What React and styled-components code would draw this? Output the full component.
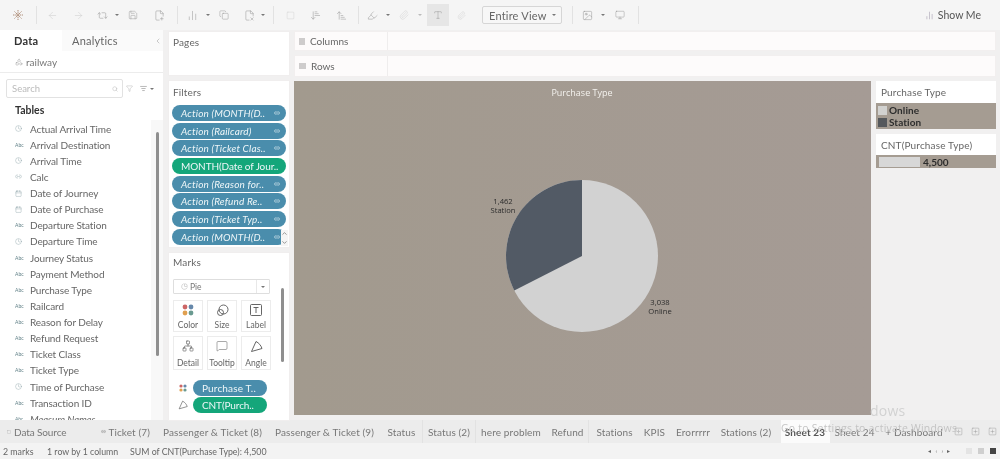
import React from "react";
import styled, { createGlobalStyle } from "styled-components";
import {
  ArrowLeft, ArrowRight, Repeat2, Save, FilePlus2, ChevronDown, ChevronLeft, Search as SearchGlyph,
  Filter, ListFilter, Network, MessageSquare, Square, Type, BarChart2, Monitor, Image, Highlighter, Paperclip,
  ArrowDownNarrowWide, ArrowUpNarrowWide, Copy, FileX2, Shapes, Clock, Calendar, PieChart, ChevronUp, Link2,
  SquarePlus,
} from "lucide-react";

const Global = createGlobalStyle`
  html, body { margin: 0; padding: 0; background: #f1f0f0; overflow: hidden; }
  * { box-sizing: border-box; }
  body { font-family: Lato, "Open Sans", "Liberation Sans", sans-serif; color: #555; }
`;

const Page = styled.div`
  position: relative; width: 1000px; height: 459px; display: flex; flex-direction: column;
  background: #f1f0f0; overflow: hidden; filter: blur(0.35px);
`;

const Toolbar = styled.header`
  height: 30px; flex: none; display: flex; align-items: center; background: #f5f5f5; color: #9a9a9a;
`;
const Slot = styled.span`
  width: ${p => p.$w}px; height: 22px; flex: none; display: flex; align-items: center; justify-content: center;
  background: ${p => (p.$active ? "#e6e6e6" : "transparent")};
  color: ${p => p.$dim ? "#c9c9c9" : "#8a8a8a"};
`;
const Divider = styled.span`
  width: 1px; height: 18px; flex: none; background: #e2e2e2; margin-left: ${p => p.$ml || 0}px;
`;
const Caret = styled.span`
  width: 4px; height: 22px; flex: none; display: flex; align-items: center; justify-content: center; margin-right: ${p => p.$mr || 0}px;
  &::before { content: ""; border-left: 2px solid transparent; border-right: 2px solid transparent; border-top: 2px solid ${p => p.$dim ? "#bbb" : "#777"}; }
`;
const ViewSelect = styled.div`
  width: 80px; height: 18px; margin: 0 10px 0 9px; flex: none; display: flex; align-items: center;
  border: 1px solid #d6d6d6; border-radius: 2px; background: #f7f7f7; font-size: 11px; color: #666; padding-left: 6px;
  letter-spacing: .2px;
  span:first-child { flex: 1; }
  span:last-child { width: 14px; display: flex; justify-content: center; }
`;
const ShowMe = styled.div`
  margin-left: auto; margin-right: 19px; display: flex; align-items: center; gap: 4px; font-size: 10.5px; color: #555;
`;

const Main = styled.div`
  flex: 1; min-height: 0; display: flex;
`;

const DataPane = styled.aside`
  width: 163px; flex: none; background: #fff; display: flex; flex-direction: column; overflow: hidden; margin-right: 5px;
`;
const TabsRow = styled.div`
  height: 21px; flex: none; display: flex; align-items: center; background: #fafafa; font-size: 11px; color: #666;
`;
const PaneTab = styled.div`
  width: ${p => p.$w}px; height: 100%; display: flex; align-items: center; padding-left: ${p => p.$pl}px;
  background: ${p => (p.$active ? "#fff" : "transparent")}; color: ${p => (p.$active ? "#333" : "#666")};
  font-weight: ${p => (p.$active ? 700 : 400)}; letter-spacing: .2px;
`;
const Source = styled.div`
  height: 22px; flex: none; display: flex; align-items: center; gap: 3px; padding: 1px 0 0 15px; font-size: 10px; color: #777;
  border-bottom: 1px solid #ececec;
`;
const SearchRow = styled.div`
  height: 25px; flex: none; display: flex; align-items: flex-end; padding-left: 6px; color: #888;
`;
const SearchBox = styled.div`
  width: 117px; height: 19px; border: 1px solid #e2e2e2; border-radius: 2px; display: flex; align-items: center;
  justify-content: space-between; padding: 0 4px 0 5px; font-size: 9.5px; color: #bbb; margin-right: 3px;
`;
const SearchTool = styled.span`
  display: flex; align-items: center; margin-left: ${p => p.$ml}px; height: 19px;
`;
const TablesHead = styled.div`
  padding: 6px 0 0 15px; height: 22px; flex: none; font-size: 10.5px; font-weight: 700; color: #333;
`;
const FieldsArea = styled.div`
  flex: 1; min-height: 0; display: flex; overflow: hidden;
`;
const FieldList = styled.ul`
  list-style: none; margin: 0; padding: .5px 0 0 15px; flex: 1; min-width: 0;
`;
const Field = styled.li`
  height: 16.14px; display: flex; align-items: center; font-size: 10px; color: #666; white-space: nowrap; letter-spacing: -.1px;
  font-style: ${p => (p.$italic ? "italic" : "normal")};
`;
const FieldMark = styled.span`
  width: 15px; flex: none; font-size: 5px; color: #5f7f86; display: flex; align-items: center; letter-spacing: 0;
`;
const ScrollTrack = styled.div`
  width: 12px; flex: none; background: #f8f8f8; margin-top: -2px; padding: 14px 0 0 5px;
`;
const ScrollThumb = styled.div`
  width: 3px; height: ${p => p.$h}px; background: #8f8f8f; border-radius: 2px;
`;

const CardsCol = styled.div`
  width: 122px; flex: none; display: flex; flex-direction: column; gap: 4px; margin: 1px 4px 0 0;
`;
const Card = styled.section`
  height: ${p => p.$h}px; flex: none; background: #fff; border: 1px solid #f0eeee; padding: ${p => p.$pt}px 0 0 4px; position: relative;
  overflow: hidden;
`;
const CardTitle = styled.div`
  font-size: 10px; color: #666; height: ${p => p.$h || 14}px; letter-spacing: .15px;
`;
const PillStack = styled.div`
  display: flex; flex-direction: column; gap: 1.7px; margin: 4px 0 0 -1px;
`;
const Pill = styled.div`
  width: ${p => p.$w || 114}px; height: 16px; flex: none; border-radius: 8px; display: flex; align-items: center;
  justify-content: space-between; padding: 0 6px 0 9px; background: ${p => (p.$green ? "#14a67a" : "#4a8dac")};
  color: #eef6f8; font-size: 10px; font-style: ${p => (p.$green || p.$plain ? "normal" : "italic")}; white-space: nowrap;
  letter-spacing: ${p => (p.$green ? "-.1px" : ".15px")};
`;
const Stepper = styled.div`
  position: absolute; left: 112px; bottom: 1px; width: 7px; height: 16px; background: #f5f5f5; display: flex; flex-direction: column;
  align-items: center; justify-content: space-between; color: #555;
`;
const MarkType = styled.div`
  width: 97px; height: 15px; border: 1px solid #dedede; border-radius: 1px; display: flex; align-items: center; font-size: 8.5px;
  color: #777; padding-left: 7px; gap: 2px; margin-top: 1px;
  b { margin-left: auto; width: 13px; height: 100%; border-left: 1px solid #e8e8e8; display: flex; align-items: center; justify-content: center; font-weight: 400; }
`;
const MarkGrid = styled.div`
  width: 97px; display: grid; grid-template-columns: repeat(3, 30px); grid-template-rows: 32px 34px; column-gap: 4px; row-gap: 4px; margin-top: 6px;
`;
const MarkBtn = styled.div`
  border: 1px solid #ececec; display: flex; flex-direction: column; align-items: center; justify-content: space-between;
  padding: 3px 0 1px; font-size: 8.5px; color: #666;
`;
const MarkThumb = styled.div`
  position: absolute; left: 112px; top: 35px; width: 3px; height: 74px; background: #8f8f8f; border-radius: 2px;
`;
const EncRow = styled.div`
  display: flex; align-items: center; height: 17.5px;
`;
const EncList = styled.div`
  margin-top: 9px;
`;
const EncIcon = styled.span`
  width: 20px; flex: none; display: flex; justify-content: center; color: #777;
`;

const Center = styled.div`
  flex: 1; min-width: 0; display: flex; flex-direction: column; padding-top: 1px;
`;
const Shelf = styled.div`
  height: ${p => p.$h}px; flex: none; margin-bottom: 4px; width: 702px; background: #fdfbfb; border: 1px solid #f2efef; display: flex; align-items: center;
`;
const ShelfLabel = styled.div`
  width: 93px; height: 100%; flex: none; border-right: 1px solid #efeded; display: flex; align-items: center; gap: 5px; padding-left: 4px;
  font-size: 10px; color: #666;
`;
const Lower = styled.div`
  flex: 1; min-height: 0; display: flex; gap: 5px;
`;
const Sheet = styled.main`
  width: 577px; height: 334px; flex: none; background: linear-gradient(90deg, #a29a8e, #a59b95);
  svg { display: block; }
`;
const RightCol = styled.div`
  width: 120px; flex: none; display: flex; flex-direction: column; gap: 5px;
`;
const LegendCard = styled.section`
  background: #fff; display: flex; flex-direction: column;
`;
const LegendHead = styled.div`
  height: ${p => p.$h}px; padding-left: 5px; display: flex; align-items: center; font-size: 10px; color: #666; letter-spacing: .15px;
`;
const LegendBody = styled.div`
  background: #a59c92; padding: ${p => p.$pad};
`;
const LegendItem = styled.div`
  display: flex; align-items: center; height: 12px; gap: 2px; font-size: 10px; font-weight: 700; color: #2d2d2d; letter-spacing: .1px;
`;
const Swatch = styled.span`
  width: 9px; height: 9px; background: ${p => p.$c};
`;
const RangeBar = styled.div`
  height: 13px; display: flex; align-items: center; gap: 3px; font-size: 10px; font-weight: 700; color: #2d2d2d;
  span:first-child { width: 41px; height: 10px; background: #d7d7d7; margin-left: 3px; }
`;

const SheetTabs = styled.nav`
  height: 23px; flex: none; display: flex; align-items: center; background: #ececec; font-size: 10px; color: #777; white-space: nowrap; letter-spacing: .12px;
`;
const SheetTab = styled.div`
  flex: none; width: ${p => p.$w}px; height: 100%; display: flex; align-items: center; justify-content: ${p => p.$left ? "flex-start" : "center"};
  padding-left: ${p => p.$pl || 0}px; gap: ${p => p.$gap || 0}px; margin-left: ${p => p.$ml || 0}px;
  letter-spacing: ${p => (p.$tight ? "-.1px" : "inherit")};
  background: ${p => (p.$active ? "#fbfbfb" : "transparent")}; font-weight: ${p => (p.$active ? 700 : 400)};
  color: ${p => (p.$active ? "#555" : "#777")}; border-right: 1px solid ${p => (p.$line ? "#e2e2e2" : "transparent")};
`;
const TabIcons = styled.div`
  display: flex; margin-left: 5px; gap: 8px; color: #888;
`;
const StatusBar = styled.footer`
  height: 16px; flex: none; display: flex; align-items: center; background: #f3f3f3; font-size: 8.8px; color: #666; padding-left: 3px; white-space: nowrap;
`;
const StatusItem = styled.span`
  width: ${p => p.$w}px; flex: none;
`;
const StatusTools = styled.div`
  margin-left: auto; display: flex; align-items: center; color: #777; padding-right: 4px;
`;
const Nav = styled.span`
  font-size: 5.5px; letter-spacing: 4.5px; margin-right: 5px; color: #666;
`;
const ViewDot = styled.span`
  width: 6px; height: 6px; margin-left: 6px; background: ${p => p.$c};
`;
const Watermark = styled.div`
  position: absolute; left: ${p => p.$l}px; top: ${p => p.$t}px; font-size: ${p => p.$s}px; color: ${p => p.$c}; white-space: nowrap; letter-spacing: .2px;
  pointer-events: none; font-family: "Open Sans", sans-serif;
`;

const I = { strokeWidth: 1 };

const Logo = () => (
  <svg width="12" height="12" viewBox="0 0 12 12" stroke="#b08f7a" strokeWidth="1" fill="none">
    <path d="M6 1v10M1 6h10M2.5 2.5l7 7M9.5 2.5l-7 7" strokeDasharray="1.5 .7" />
  </svg>
);
const Abc = () => <FieldMark>Abc</FieldMark>;
const Cal = () => <FieldMark><Calendar size={7} {...I} /></FieldMark>;
const Time = () => <FieldMark><Clock size={7} {...I} /></FieldMark>;
const Link = () => <FieldMark><Link2 size={7} {...I} /></FieldMark>;

const fields = [
  ["Actual Arrival Time", Time], ["Arrival Destination", Abc], ["Arrival Time", Time], ["Calc", Link],
  ["Date of Journey", Cal], ["Date of Purchase", Cal], ["Departure Station", Abc], ["Departure Time", Time],
  ["Journey Status", Abc], ["Payment Method", Abc], ["Purchase Type", Abc], ["Railcard", Abc],
  ["Reason for Delay", Abc], ["Refund Request", Abc], ["Ticket Class", Abc], ["Ticket Type", Abc],
  ["Time of Purchase", Time], ["Transaction ID", Abc], ["Measure Names", Abc],
];

const filters = [
  ["Action (MONTH(D..", 0], ["Action (Railcard)", 0], ["Action (Ticket Clas..", 0], ["MONTH(Date of Jour..", 1],
  ["Action (Reason for..", 0], ["Action (Refund Re..", 0], ["Action (Ticket Typ..", 0], ["Action (MONTH(D..", 0],
];

const tabs = [
  ["Passenger & Ticket (8)", 112], ["Passenger & Ticket (9)", 112], ["Status", 42, 1], ["Status (2)", 53, 1],
  ["here problem", 71], ["Refund", 42, 1], ["Stations", 52], ["KPIS", 28], ["Erorrrrr", 49], ["Stations (2)", 57],
];

const ColorDots = ({ size = 12 }) => (
  <svg width={size} height={size} viewBox="0 0 12 12">
    <circle cx="3" cy="3" r="2.4" fill="#c66" /><circle cx="9" cy="3" r="2.4" fill="#68a" />
    <circle cx="3" cy="9" r="2.4" fill="#e0a050" /><circle cx="9" cy="9" r="2.4" fill="#6a9a90" />
  </svg>
);
const SizeIcon = () => (
  <svg width="13" height="13" viewBox="0 0 13 13" fill="none" stroke="#555" strokeWidth=".9">
    <circle cx="7.5" cy="5.5" r="4.5" /><circle cx="4.5" cy="8.5" r="3" />
  </svg>
);
const AngleIcon = ({ size = 13, c = "#555" }) => (
  <svg width={size} height={size} viewBox="0 0 13 13" fill="none" stroke={c} strokeWidth=".9">
    <path d="M1.5 11.5 6 1.5c3 1.5 5 4 6 7z" />
  </svg>
);
const LabelIcon = () => (
  <svg width="12" height="12" viewBox="0 0 12 12" fill="none" stroke="#555" strokeWidth=".9">
    <rect x=".5" y=".5" width="11" height="11" rx="1" /><path d="M3.5 3.5h5M6 3.5v5.5" />
  </svg>
);
const marks = [
  ["Color", <ColorDots key="a" />], ["Size", <SizeIcon key="b" />], ["Label", <LabelIcon key="c" />],
  ["Detail", <Network key="d" size={12} strokeWidth={1.1} color="#444" />],
  ["Tooltip", <MessageSquare key="e" size={12} strokeWidth={1} color="#555" />], ["Angle", <AngleIcon key="f" />],
];

export default function App() {
  return (
    <Page>
      <Global />
      <Toolbar>
        <Slot $w={36}><Logo /></Slot>
        <Divider />
        <Slot $w={30} $dim><ArrowLeft size={11} {...I} /></Slot>
        <Slot $w={22} $dim><ArrowRight size={11} {...I} /></Slot>
        <Slot $w={26}><Repeat2 size={11} {...I} /></Slot>
        <Caret $mr={2} />
        <Slot $w={24}><Save size={10} {...I} /></Slot>
        <Slot $w={28}><FilePlus2 size={11} {...I} /></Slot>
        <Divider $ml={4} />
        <Slot $w={28}><BarChart2 size={11} {...I} /></Slot>
        <Caret />
        <Slot $w={28}><Copy size={10} {...I} /></Slot>
        <Slot $w={23}><FileX2 size={11} {...I} /></Slot>
        <Caret $mr={3} />
        <Slot $w={5} />
        <Divider />
        <Slot $w={32} $dim><Square size={9} {...I} /></Slot>
        <Slot $w={18}><ArrowDownNarrowWide size={11} {...I} /></Slot>
        <Slot $w={34}><ArrowUpNarrowWide size={11} {...I} /></Slot>
        <Divider />
        <Slot $w={27}><Highlighter size={11} {...I} /></Slot>
        <Caret />
        <Slot $w={28} $dim><Paperclip size={10} {...I} /></Slot>
        <Caret $dim />
        <Slot $w={5} />
        <Slot $w={22} $active><Type size={10} {...I} /></Slot>
        <Slot $w={24} $dim><Paperclip size={9} {...I} /></Slot>
        <ViewSelect><span>Entire View</span><span><Caret /></span></ViewSelect>
        <Divider />
        <Slot $w={28}><Image size={11} {...I} /></Slot>
        <Caret />
        <Slot $w={30}><Monitor size={10} {...I} /></Slot>
        <Divider $ml={3} />
        <ShowMe><BarChart2 size={9} color="#7a6f8a" {...I} /><span>Show Me</span></ShowMe>
      </Toolbar>

      <Main>
        <DataPane>
          <TabsRow>
            <PaneTab $w={62} $pl={14} $active>Data</PaneTab>
            <PaneTab $w={92} $pl={10}>Analytics</PaneTab>
            <ChevronLeft size={8} {...I} />
          </TabsRow>
          <Source><Shapes size={8} {...I} />railway</Source>
          <SearchRow>
            <SearchBox>Search<SearchGlyph size={6} /></SearchBox>
            <SearchTool $ml={0}><Filter size={7} {...I} /></SearchTool>
            <SearchTool $ml={7}><ListFilter size={7} /></SearchTool>
            <SearchTool $ml={3}><Caret /></SearchTool>
          </SearchRow>
          <TablesHead>Tables</TablesHead>
          <FieldsArea>
            <FieldList>
              {fields.map(([name, Icon]) => (
                <Field key={name} $italic={name === "Measure Names"}><Icon />{name}</Field>
              ))}
            </FieldList>
            <ScrollTrack><ScrollThumb $h={224} /></ScrollTrack>
          </FieldsArea>
        </DataPane>

        <CardsCol>
          <Card $h={45} $pt={4}><CardTitle>Pages</CardTitle></Card>
          <Card $h={168} $pt={5}>
            <CardTitle $h={15}>Filters</CardTitle>
            <PillStack>
              {filters.map(([t, g], i) => (
                <Pill key={i} $green={g}>{t}{!g && <Link2 size={6} />}</Pill>
              ))}
            </PillStack>
            <Stepper><ChevronUp size={7} /><ChevronDown size={7} /></Stepper>
          </Card>
          <Card $h={169} $pt={3}>
            <CardTitle $h={22}>Marks</CardTitle>
            <MarkType><PieChart size={7} {...I} />Pie<b><Caret /></b></MarkType>
            <MarkThumb />
            <MarkGrid>
              {marks.map(([l, ic]) => <MarkBtn key={l}>{ic}{l}</MarkBtn>)}
            </MarkGrid>
            <EncList>
              <EncRow><EncIcon><ColorDots size={8} /></EncIcon><Pill $w={74} $plain>Purchase T..</Pill></EncRow>
              <EncRow><EncIcon><AngleIcon size={10} c="#666" /></EncIcon><Pill $w={74} $green>CNT(Purch..</Pill></EncRow>
            </EncList>
          </Card>
        </CardsCol>

        <Center>
          <Shelf $h={20}><ShelfLabel><svg width="6" height="7" viewBox="0 0 6 7" stroke="#777" strokeWidth=".7"><path d="M1 0v7M3 0v7M5 0v7" /></svg>Columns</ShelfLabel></Shelf>
          <Shelf $h={22}><ShelfLabel><svg width="7" height="6" viewBox="0 0 7 6" stroke="#777" strokeWidth=".7"><path d="M0 1h7M0 3h7M0 5h7" /></svg>Rows</ShelfLabel></Shelf>
          <Lower>
            <Sheet>
              <svg width="577" height="334" viewBox="0 0 577 334" fontFamily="Open Sans, sans-serif">
                <text x="288" y="15" textAnchor="middle" fontSize="9" fill="#f4f2ee">Purchase Type</text>
                <circle cx="288" cy="175" r="76" fill="#d2d2d2" />
                <path d="M288 175V99A76 76 0 0 0 220.3 209.5Z" fill="#525a65" />
                <g fontSize="7.6" fill="#2c2c2c" textAnchor="middle">
                  <text x="209" y="123">1,462</text>
                  <text x="209" y="132">Station</text>
                  <text x="366" y="224">3,038</text>
                  <text x="366" y="233">Online</text>
                </g>
              </svg>
            </Sheet>
            <RightCol>
              <LegendCard>
                <LegendHead $h={22}>Purchase Type</LegendHead>
                <LegendBody $pad="1px 0 1px 2px">
                  <LegendItem><Swatch $c="#d2d2d0" />Online</LegendItem>
                  <LegendItem><Swatch $c="#55585c" />Station</LegendItem>
                </LegendBody>
              </LegendCard>
              <LegendCard>
                <LegendHead $h={21}>CNT(Purchase Type)</LegendHead>
                <LegendBody $pad="0">
                  <RangeBar><span /><span>4,500</span></RangeBar>
                </LegendBody>
              </LegendCard>
            </RightCol>
          </Lower>
        </Center>
      </Main>

      <SheetTabs>
        <SheetTab $w={101} $left $pl={7} $gap={3} $tight><Square size={4} {...I} />Data Source</SheetTab>
        <SheetTab $w={56} $left><Link2 size={5} />&nbsp;Ticket (7)</SheetTab>
        {tabs.map(([t, w, line]) => <SheetTab key={t} $w={w} $line={line}>{t}</SheetTab>)}
        <SheetTab $w={49} $ml={6} $active>Sheet 23</SheetTab>
        <SheetTab $w={50}>Sheet 24</SheetTab>
        <SheetTab $w={69}>+ Dashboard</SheetTab>
        <TabIcons>
          <SquarePlus size={9} {...I} /><SquarePlus size={9} {...I} /><SquarePlus size={9} {...I} />
        </TabIcons>
      </SheetTabs>
      <StatusBar>
        <StatusItem $w={44}>2 marks</StatusItem>
        <StatusItem $w={83}>1 row by 1 column</StatusItem>
        <span>SUM of CNT(Purchase Type): 4,500</span>
        <StatusTools>
          <Nav>◂‹›▸</Nav>
          <ViewDot $c="#e4e4e4" /><ViewDot $c="#cfcfcf" /><ViewDot $c="#444" />
        </StatusTools>
      </StatusBar>

      <Watermark $l={870} $t={401} $s={14} $c="#d2d2d2">dows</Watermark>
      <Watermark $l={781} $t={421} $s={10.5} $c="#c4c4c4">Go to Settings to activate Windows.</Watermark>
    </Page>
  );
}
